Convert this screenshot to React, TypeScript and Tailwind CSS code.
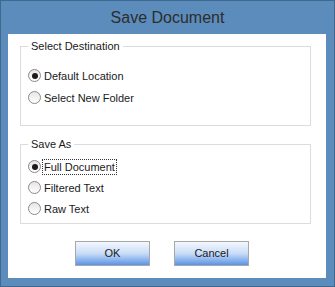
import { useState } from 'react';

const font = { fontFamily: '"Liberation Sans", Arial, sans-serif' };

function Radio({ label, checked, focused, onClick }: { label: string; checked: boolean; focused?: boolean; onClick: () => void }) {
  return (
    <div className="flex items-center h-[20px] cursor-default" onClick={onClick}>
      <span className="w-[13px] h-[13px] rounded-full border border-[#8a8a8a] bg-gradient-to-b from-[#e6e6e6] to-[#ffffff] flex items-center justify-center">
        {checked && <span className="w-[6px] h-[6px] rounded-full bg-[#1a1a1a]" />}
      </span>
      <span
        className={`ml-[2px] px-[1px] text-[11px] text-[#1a1a1a] leading-[14px] ${
          focused ? 'outline outline-1 outline-dotted outline-[#333]' : ''
        }`}
      >
        {label}
      </span>
    </div>
  );
}

export default function App() {
  const [dest, setDest] = useState('default');
  const [mode, setMode] = useState('full');

  return (
    <div className="w-[335px] h-[287px] bg-[#5b8cbb] border border-[#3f6890] flex flex-col" style={font}>
      {/* Title bar */}
      <div className="h-[33px] flex items-center justify-center text-[16px] text-[#2d2d2d]">Save Document</div>

      {/* Client area */}
      <div className="flex-1 mx-[7px] mb-[8px] mr-[8px] bg-white flex flex-col pt-[4px] pl-[12px] pr-[15px]">
        <fieldset className="border border-[#dcdcdc] h-[88px] pl-[7px] pt-[11px]">
          <legend className="px-[3px] text-[11px] text-[#1a1a1a]">Select Destination</legend>
          <div className="flex flex-col gap-[2px]">
            <Radio label="Default Location" checked={dest === 'default'} onClick={() => setDest('default')} />
            <Radio label="Select New Folder" checked={dest === 'new'} onClick={() => setDest('new')} />
          </div>
        </fieldset>

        <fieldset className="mt-[10px] border border-[#dcdcdc] h-[88px] pl-[7px] pt-[4px]">
          <legend className="px-[3px] text-[11px] text-[#1a1a1a]">Save As</legend>
          <div className="flex flex-col gap-[1px]">
            <Radio label="Full Document" checked={mode === 'full'} focused onClick={() => setMode('full')} />
            <Radio label="Filtered Text" checked={mode === 'filtered'} onClick={() => setMode('filtered')} />
            <Radio label="Raw Text" checked={mode === 'raw'} onClick={() => setMode('raw')} />
          </div>
        </fieldset>

        <div className="mt-[17px] flex gap-[24px] pl-[55px]">
          <button className="w-[75px] h-[25px] border border-[#a8a8a8] bg-gradient-to-b from-[#f4f8fe] via-[#c9dcf7] to-[#5a93e6] text-[11px] text-[#1a1a1a]">
            OK
          </button>
          <button className="w-[75px] h-[25px] border border-[#a8a8a8] bg-gradient-to-b from-[#f4f8fe] via-[#c9dcf7] to-[#5a93e6] text-[11px] text-[#1a1a1a]">
            Cancel
          </button>
        </div>
      </div>
    </div>
  );
}
